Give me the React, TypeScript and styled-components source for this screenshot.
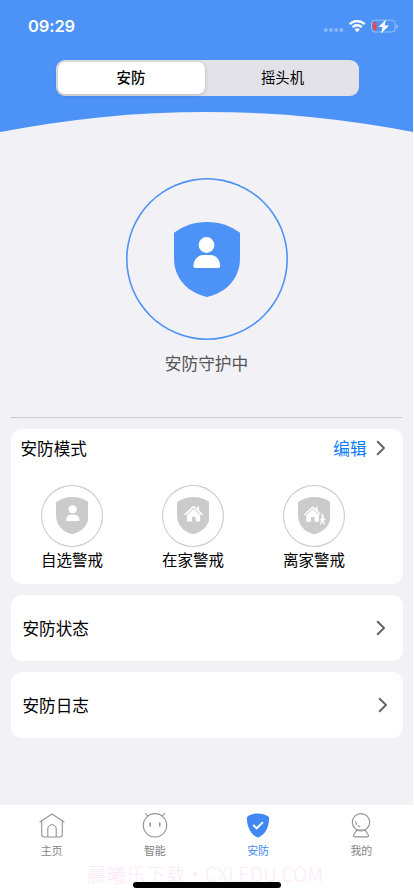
import React from "react";
import styled, { createGlobalStyle } from "styled-components";

const GlobalStyle = createGlobalStyle`
  * { box-sizing: border-box; }
  body { margin: 0; background: #fff; font-family: "Noto Sans CJK SC", sans-serif; }
  svg { display: block; flex: none; }
`;

const Screen = styled.div`
  position: relative;
  width: 413px;
  height: 888px;
  overflow: hidden;
  display: flex;
  flex-direction: column;
  background: #f1f1f6;
`;

const Header = styled.header`
  position: relative;
  height: 132px;
  flex: none;
  overflow: hidden;
  background: #4d92f6;
  &::after {
    content: "";
    position: absolute;
    top: 111.5px;
    left: calc(50% - 1076px);
    width: 2152px;
    height: 2152px;
    border-radius: 50%;
    background: #f1f1f6;
  }
`;

const StatusBar = styled.div`
  display: flex;
  align-items: center;
  justify-content: space-between;
  height: 60px;
  padding: 0 14px 8px 28px;
`;

const Time = styled.span`
  font: 600 16.5px/20px Inter, sans-serif;
  letter-spacing: -0.1px;
  color: #fff;
`;

const Segments = styled.div`
  display: flex;
  width: 303px;
  height: 35.5px;
  margin-left: 55.5px;
  padding: 2px;
  border-radius: 9px;
  background: #e2e2e8;
`;

const Segment = styled.button<{ $active?: boolean }>`
  flex: ${(p) => (p.$active ? "0 0 147px" : "1")};
  border: 0;
  padding: 0 0 1px ${(p) => (p.$active ? 0 : 4)}px;
  border-radius: 7px;
  font: ${(p) => (p.$active ? 500 : 400)} 14.4px/30px "Noto Sans CJK SC", sans-serif;
  color: #000;
  background: ${(p) => (p.$active ? "#fff" : "transparent")};
  box-shadow: ${(p) => (p.$active ? "0 1px 4px rgba(0,0,0,.2)" : "none")};
`;

const Hero = styled.section`
  display: flex;
  flex-direction: column;
  align-items: center;
  height: 286px;
  flex: none;
  margin: 0 11px;
  padding-top: 46px;
  border-bottom: 1px solid #cbcbd0;
`;

const Ring = styled.div<{ $size: number; $stroke: string; $width: number }>`
  display: flex;
  align-items: center;
  justify-content: center;
  width: ${(p) => p.$size}px;
  height: ${(p) => p.$size}px;
  box-shadow: inset 0 0 0 ${(p) => p.$width}px ${(p) => p.$stroke};
  border-radius: 50%;
`;

const HeroLabel = styled.div`
  margin-top: 11px;
  font-size: 16.7px;
  line-height: 24px;
  color: #555;
`;

const Cards = styled.main`
  display: flex;
  flex-direction: column;
  gap: 11px;
  padding: 11px 10.5px 0 11px;
`;

const Card = styled.section`
  border-radius: 11px;
  background: #fff;
`;

const ModeCard = styled(Card)`
  height: 155px;
`;

const ModeHeader = styled.div`
  display: flex;
  align-items: center;
  height: 38px;
  padding: 0 17px 0 9.5px;
`;

const Title = styled.h2`
  flex: 1;
  margin: 0;
  font-size: 16.6px;
  font-weight: 400;
  line-height: 24px;
  color: #000;
`;

const Edit = styled.span`
  margin-right: 9px;
  font-size: 16.6px;
  line-height: 24px;
  color: #087cff;
`;

const Modes = styled.div`
  display: grid;
  grid-template-columns: repeat(3, 121px);
  padding: 18px 0 0 0.5px;
`;

const Mode = styled.div`
  display: flex;
  flex-direction: column;
  align-items: center;
`;

const ModeLabel = styled.span`
  font-size: 15.5px;
  line-height: 24px;
  white-space: nowrap;
  color: #000;
`;

const LinkCard = styled(Card)<{ $end: number }>`
  display: flex;
  align-items: center;
  height: 66px;
  padding: 0 ${(p) => p.$end}px 0 11.5px;
`;

const TabBar = styled.nav`
  display: grid;
  grid-template-columns: repeat(4, 1fr);
  height: 83px;
  flex: none;
  margin-top: auto;
  background: #fff;
`;

const Tab = styled.div<{ $active?: boolean }>`
  display: flex;
  flex-direction: column;
  align-items: center;
  padding-top: 7px;
  font-size: 11px;
  font-weight: 400;
  line-height: 16px;
  color: ${(p) => (p.$active ? "#4088f2" : "#858585")};
  svg { margin-bottom: 4px; }
`;

const Watermark = styled.div`
  position: absolute;
  left: 87px;
  top: 862px;
  font-size: 19.7px;
  font-weight: 300;
  line-height: 24px;
  white-space: nowrap;
  color: #fce9fb;
`;

const HomeIndicator = styled.div`
  position: absolute;
  left: 133px;
  top: 882px;
  width: 148px;
  height: 5.5px;
  border-radius: 3px;
  background: #000;
`;

const StatusIcons = () => (
  <svg width="76" height="18" viewBox="0 0 76 18" fill="none">
    <g fill="#fff" fillOpacity=".35">
      <rect x="1" y="11.2" width="3.6" height="3.6" rx="1.2" />
      <rect x="6.2" y="11.2" width="3.6" height="3.6" rx="1.2" />
      <rect x="11.4" y="11.2" width="3.6" height="3.6" rx="1.2" />
      <rect x="16.6" y="11.2" width="3.6" height="3.6" rx="1.2" />
    </g>
    <g stroke="#fff" strokeWidth="2.3">
      <path d="M26.7 7.1a10.8 10.8 0 0 1 15 0" />
      <path d="M29.6 10.1a6.7 6.7 0 0 1 9.2 0" />
    </g>
    <path d="M34.2 15.2l-2.6-2.7a3.8 3.8 0 0 1 5.2 0z" fill="#fff" />
    <rect x="48.5" y="3.2" width="23.7" height="11.8" rx="3.3" stroke="#fff" strokeOpacity=".42" />
    <path d="M73.5 7.2c2 .7 2 3.6 0 4.4z" fill="#fff" fillOpacity=".45" />
    <rect x="50.1" y="5" width="3.4" height="8.2" rx="1" fill="#f04747" />
    <path d="M62.9 2.4L55.4 10h4.2l-1.5 6.4 8-8h-4.5z" fill="#fff" />
  </svg>
);

const Chevron = () => (
  <svg width="10" height="16" viewBox="0 0 10 16" fill="none" stroke="#666" strokeWidth="2" strokeLinecap="round" strokeLinejoin="round">
    <path d="M1.7 1.8L8 8l-6.3 6.2" />
  </svg>
);

const PersonGlyph = () => (
  <g fill="#fff">
    <circle cx="32.5" cy="23" r="7.9" />
    <path d="M19.4 44C20 37 24 33 29.400 33h7c5.400 0 9.500 4 9.800 11 .1 1.300-.7 2-2.100 2H21.500c-1.300 0-2.200-.7-2.100-2z" />
  </g>
);

const SmallPersonGlyph = () => (
  <g fill="#fff">
    <circle cx="33.5" cy="24.8" r="8.4" />
    <path d="M20 46.500C20.500 39 24.500 35.500 30 35.500h7.500c5.500 0 9.500 3.500 10 11q0 2-2 2H22q-2 0-2-2z" />
  </g>
);

const HomeGlyph = () => (
  <g fill="#fff" transform="translate(0.5 1)">
    <path d="M14 33.8L32.8 16l7 6.6V18h4.3v8.6l7.6 7.2-2.3 2.5-16.6-15.5-16.5 15.5z" />
    <path d="M19.5 35.1L32.8 23 46 35.1v13H37v-9.5h-7.2v9.5H19.5z" />
  </g>
);

const AwayGlyph = () => (
  <g fill="#fff" transform="translate(1 1.5)">
    <path d="M10.5 34L28.4 17l6.2 5.7v-4.4h4v8.1l6.2 6-2 2.1-14.4-13.6-15.9 15z" />
    <path d="M15.6 35.2L28.4 23l12.8 12.2v12.9h-8.9v-9.5h-7.1v9.5h-9.6z" />
    <circle cx="48.6" cy="35.8" r="2.6" />
    <path d="M46.2 39.2l4.2-.2 2.1 4 2.7 1.3-.7 1.6-3.3-1.3-.5 2.4 3.2 6.7-2 .8-3.9-6.6-2.2 6.3-2.4-.7 2.5-8 .2-2.6-1.3 3.1-1.7-.5z" />
  </g>
);

const Shield = ({ width, color, children }: { width: number; color: string; children: React.ReactNode }) => (
  <svg width={width} height={(width * 75) / 66} viewBox="0 0 66 75">
    <path d="M0 10.8C9 4 20.2 0 33 0s24 4 33 10.8V36c0 20-13.2 34.5-33 39C13.2 70.5 0 56 0 36z" fill={color} />
    {children}
  </svg>
);

const HouseIcon = () => (
  <svg width="26" height="26" viewBox="0 0 26 26" fill="none" stroke="#929292" strokeWidth="1.1" strokeLinecap="round" strokeLinejoin="round">
    <path d="M1 10L13 2l12 8M2.7 9.4v13.1c0 1.7.8 2.5 2.5 2.5h15.6c1.7 0 2.5-.8 2.5-2.5V9.4M8.8 25v-8a4.2 4.2 0 0 1 8.4 0v8" />
  </svg>
);

const RobotIcon = () => (
  <svg width="26" height="26" viewBox="0 0 26 26" fill="none" stroke="#929292" strokeWidth="1.1" strokeLinecap="round">
    <circle cx="13" cy="13.3" r="11.7" />
    <path d="M5.8 4.2L3.4 1.5M20.2 4.2L22.6 1.5" />
    <path d="M8.2 11v3M17.8 11v3" strokeWidth="1.5" />
  </svg>
);

const SafeIcon = () => (
  <svg width="26" height="26" viewBox="0 0 26 26" fill="none">
    <path d="M13 1.5c3.7 0 7.6 1.1 10.3 3 .6.4.8.8.8 1.5 0 8.500-3.200 15.500-9.700 19.100-1 .6-1.800.6-2.800 0C5.100 21.500 1.900 14.500 1.900 6c0-.7.2-1.100.8-1.500 2.700-1.900 6.600-3 10.300-3z" fill="#4088f4" />
    <path d="M8.2 13l3.5 3.3 6.3-6.2" stroke="#fff" strokeWidth="2" />
  </svg>
);

const CameraIcon = () => (
  <svg width="26" height="26" viewBox="0 0 26 26" fill="none" stroke="#929292" strokeWidth="1.1" strokeLinecap="round" strokeLinejoin="round">
    <circle cx="13" cy="10.3" r="8.7" />
    <path d="M8.8 18c-.7 2-3.2 3.7-3.3 5.7 0 .8.5 1.2 1.3 1.2h12.4c.8 0 1.3-.4 1.3-1.2-.1-2-2.6-3.7-3.3-5.7z" />
    <path d="M7.6 9.5a5.6 5.6 0 0 0 4.2 5" strokeDasharray="3 2" />
  </svg>
);

const modes = [
  { label: "自选警戒", glyph: <SmallPersonGlyph /> },
  { label: "在家警戒", glyph: <HomeGlyph /> },
  { label: "离家警戒", glyph: <AwayGlyph /> },
];

export default function App() {
  return (
    <>
      <GlobalStyle />
      <Screen>
        <Header>
          <StatusBar>
            <Time>09:29</Time>
            <StatusIcons />
          </StatusBar>
          <Segments>
            <Segment $active>安防</Segment>
            <Segment>摇头机</Segment>
          </Segments>
        </Header>
        <Hero>
          <Ring $size={162} $stroke="#4d92f6" $width={1.6}>
            <Shield width={66} color="#4d92f6"><PersonGlyph /></Shield>
          </Ring>
          <HeroLabel>安防守护中</HeroLabel>
        </Hero>
        <Cards>
          <ModeCard>
            <ModeHeader>
              <Title>安防模式</Title>
              <Edit>编辑</Edit>
              <Chevron />
            </ModeHeader>
            <Modes>
              {modes.map((m) => (
                <Mode key={m.label}>
                  <Ring $size={62} $stroke="#cbcbcb" $width={1.1}>
                    <Shield width={32.8} color="#cbcbcb">{m.glyph}</Shield>
                  </Ring>
                  <ModeLabel>{m.label}</ModeLabel>
                </Mode>
              ))}
            </Modes>
          </ModeCard>
          <LinkCard $end={17}>
            <Title>安防状态</Title>
            <Chevron />
          </LinkCard>
          <LinkCard $end={15}>
            <Title>安防日志</Title>
            <Chevron />
          </LinkCard>
        </Cards>
        <TabBar>
          <Tab><HouseIcon />主页</Tab>
          <Tab><RobotIcon />智能</Tab>
          <Tab $active><SafeIcon />安防</Tab>
          <Tab><CameraIcon />我的</Tab>
        </TabBar>
        <Watermark>晨曦乐下载・CXLEDU.COM</Watermark>
        <HomeIndicator />
      </Screen>
    </>
  );
}
